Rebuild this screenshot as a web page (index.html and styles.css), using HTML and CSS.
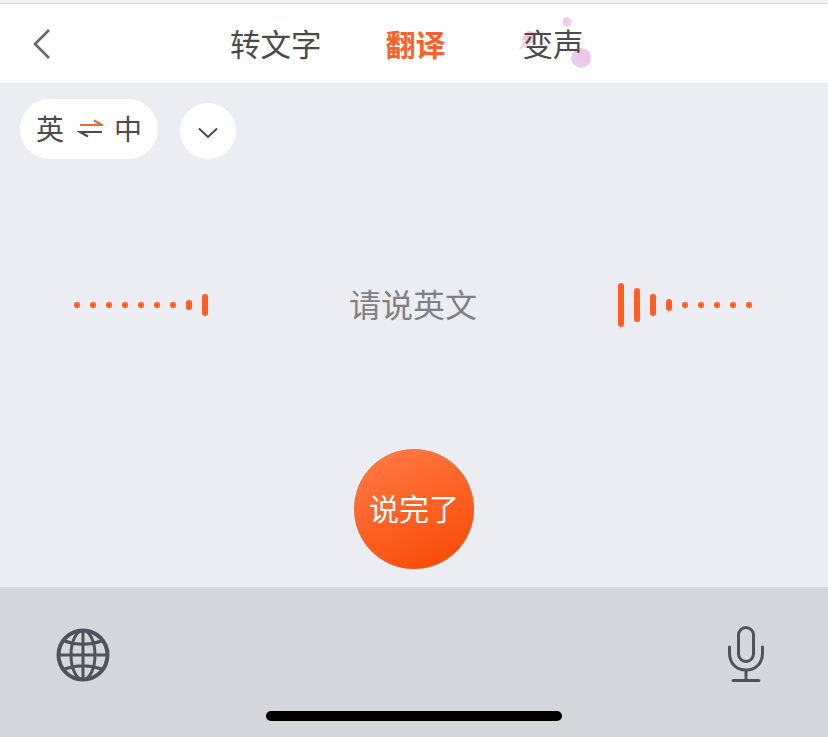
FILE: index.html
```html
<!DOCTYPE html>
<html lang="zh-CN">
<head>
    <meta charset="UTF-8">
    <meta name="viewport" content="width=device-width, initial-scale=1.0">
    <title>翻译</title>
    <link rel="stylesheet" href="styles.css">
</head>
<body>
    <header class="top-bar">
        <svg class="back-icon" width="20" height="32" viewBox="0 0 20 32">
            <path d="M16 2 L2 16 L16 30" fill="none" stroke="#666" stroke-width="2.6"/>
        </svg>
        <nav class="tabs">
            <span class="tab">转文字</span>
            <span class="tab tab-active">翻译</span>
            <span class="tab tab-voice">
                <svg class="voice-deco" width="80" height="60" viewBox="0 0 80 60">
                    <defs>
                        <linearGradient id="decoBig" x1="1" y1="0" x2="0" y2="1">
                            <stop offset="0" stop-color="#f8bcdc"/>
                            <stop offset="1" stop-color="#dfd8f8"/>
                        </linearGradient>
                        <linearGradient id="decoBolt" x1="1" y1="0" x2="0" y2="1">
                            <stop offset="0" stop-color="#f9a9d2"/>
                            <stop offset="1" stop-color="#f8e6f0"/>
                        </linearGradient>
                    </defs>
                    <path d="M14 21 L22 22 L18 29 L22 30 L4 41 L10 31 L7 30 Z" fill="url(#decoBolt)"/>
                    <circle cx="53" cy="12" r="4.5" fill="#f3cbe6"/>
                    <circle cx="67" cy="48" r="10" fill="url(#decoBig)"/>
                </svg>
                <span class="tab-label">变声</span>
            </span>
        </nav>
    </header>

    <main class="content">
        <div class="toolbar">
            <div class="lang-pill">
                <span>英</span>
                <svg class="swap-icon" width="26" height="20" viewBox="0 0 26 20">
                    <path d="M3 7 H25 L17 2.5" fill="none" stroke="#e8693a" stroke-width="2.2"/>
                    <path d="M25 14 H3 L11 18.5" fill="none" stroke="#4a4a4a" stroke-width="2.2"/>
                </svg>
                <span>中</span>
            </div>
            <div class="lang-more">
                <svg width="20" height="12" viewBox="0 0 20 12">
                    <path d="M1 1.5 L10 10 L19 1.5" fill="none" stroke="#444" stroke-width="1.8"/>
                </svg>
            </div>
        </div>

        <div class="listen-row">
            <div class="wave">
                <i class="bar"></i><i class="bar"></i><i class="bar"></i><i class="bar"></i><i class="bar"></i><i class="bar"></i><i class="bar"></i>
                <i class="bar h10"></i><i class="bar h22"></i>
            </div>
            <p class="hint">请说英文</p>
            <div class="wave">
                <i class="bar h44"></i><i class="bar h34"></i><i class="bar h22"></i><i class="bar h12"></i>
                <i class="bar"></i><i class="bar"></i><i class="bar"></i><i class="bar"></i><i class="bar"></i>
            </div>
        </div>

        <button class="done-button">说完了</button>
    </main>

    <footer class="keyboard">
        <div class="keyboard-row">
            <svg class="globe-icon" width="54" height="54" viewBox="0 0 54 54" fill="none" stroke="#50535c" stroke-width="3">
                <circle cx="27" cy="27" r="24.5" stroke-width="4"/>
                <ellipse cx="27" cy="27" rx="12" ry="24.5"/>
                <path d="M27 2.5 V51.5 M2.5 27 H51.5 M7 12.5 Q27 20 47 12.5 M7 41.5 Q27 34 47 41.5"/>
            </svg>
            <svg width="40" height="56" viewBox="0 0 40 56" fill="none" stroke="#50535c" stroke-width="3">
                <rect x="12.5" y="1.5" width="15" height="34" rx="7.5"/>
                <path d="M3.5 21 V27 C3.5 37 10 44 20 44 C30 44 36.5 37 36.5 27 V21 M20 44 V54.5 M7 54.5 H33" stroke-linecap="round"/>
            </svg>
        </div>
        <div class="home-bar"></div>
    </footer>
</body>
</html>
```

FILE: styles.css
```css
* {
    box-sizing: border-box;
}
html, body {
    height: 100%;
}
body {
    margin: 0;
    display: flex;
    flex-direction: column;
    overflow: hidden;
    background: #ecedf3;
    color: #4a4a4a;
    font-family: "Noto Sans CJK SC", "Liberation Sans", sans-serif;
}
.top-bar {
    height: 83px;
    display: flex;
    align-items: center;
    padding: 4px 0 0 33px;
    background: linear-gradient(#f1f1f1 3px, #d9d9d9 3px, #d9d9d9 4px, #fff 4px);
}
.back-icon {
    flex: none;
}
.tabs {
    display: flex;
    align-items: center;
    margin-left: 177px;
    margin-bottom: 2px;
    font-size: 30.5px;
    line-height: 44px;
}
.tab {
    position: relative;
    display: block;
}
.tab-active {
    margin-left: 64px;
    margin-right: 77px;
    color: #ff5f2b;
    font-size: 30px;
    font-weight: 700;
}
.tab-label {
    position: relative;
}
/* 变声 decoration sits behind the label */
.voice-deco {
    position: absolute;
    left: -9px;
    top: -11px;
}
.content {
    flex: 1;
    display: flex;
    flex-direction: column;
    align-items: center;
}
.toolbar {
    align-self: stretch;
    display: flex;
    align-items: flex-end;
    gap: 22px;
    padding: 16px 20px 0;
}
.lang-pill {
    width: 138px;
    height: 60px;
    display: flex;
    align-items: center;
    gap: 13px;
    padding: 0 0 2px 16px;
    background: #fff;
    border-radius: 30px;
    font-size: 28px;
}
.swap-icon {
    margin-right: -2px;
}
.lang-more {
    width: 56px;
    height: 56px;
    display: flex;
    align-items: center;
    justify-content: center;
    padding-top: 3px;
    background: #fff;
    border-radius: 50%;
}
.listen-row {
    align-self: stretch;
    height: 44px;
    margin-top: 124px;
    padding: 0 76px 0 74px;
    display: flex;
    align-items: center;
    justify-content: space-between;
}
.wave {
    display: flex;
    align-items: center;
    gap: 10px;
}
.bar {
    display: block;
    width: 6px;
    height: 6px;
    background: #ff5f24;
    border-radius: 3px;
}
.h10 { height: 10px; }
.h12 { height: 12px; }
.h22 { height: 22px; }
.h34 { height: 34px; }
.h44 { height: 44px; }
.hint {
    margin: 0;
    padding-bottom: 4px;
    font-size: 32px;
    color: #808084;
}
.done-button {
    width: 120px;
    height: 120px;
    margin-top: 122px;
    padding: 0 0 4px;
    border: none;
    border-radius: 50%;
    background: linear-gradient(155deg, #ff7c48, #f94700);
    box-shadow: inset 0 0 0 1px rgba(180, 120, 110, 0.25);
    color: #fff;
    font-family: inherit;
    font-size: 30px;
}
.keyboard {
    height: 150px;
    padding-top: 39px;
    display: flex;
    flex-direction: column;
    align-items: center;
    background: #d6d7dc;
}
.keyboard-row {
    align-self: stretch;
    height: 56px;
    padding: 0 62px 0 56px;
    display: flex;
    align-items: center;
    justify-content: space-between;
}
.globe-icon {
    margin-top: 2px;
}
.home-bar {
    width: 296px;
    height: 10px;
    margin-top: 29px;
    background: #000;
    border-radius: 5px;
}
```
